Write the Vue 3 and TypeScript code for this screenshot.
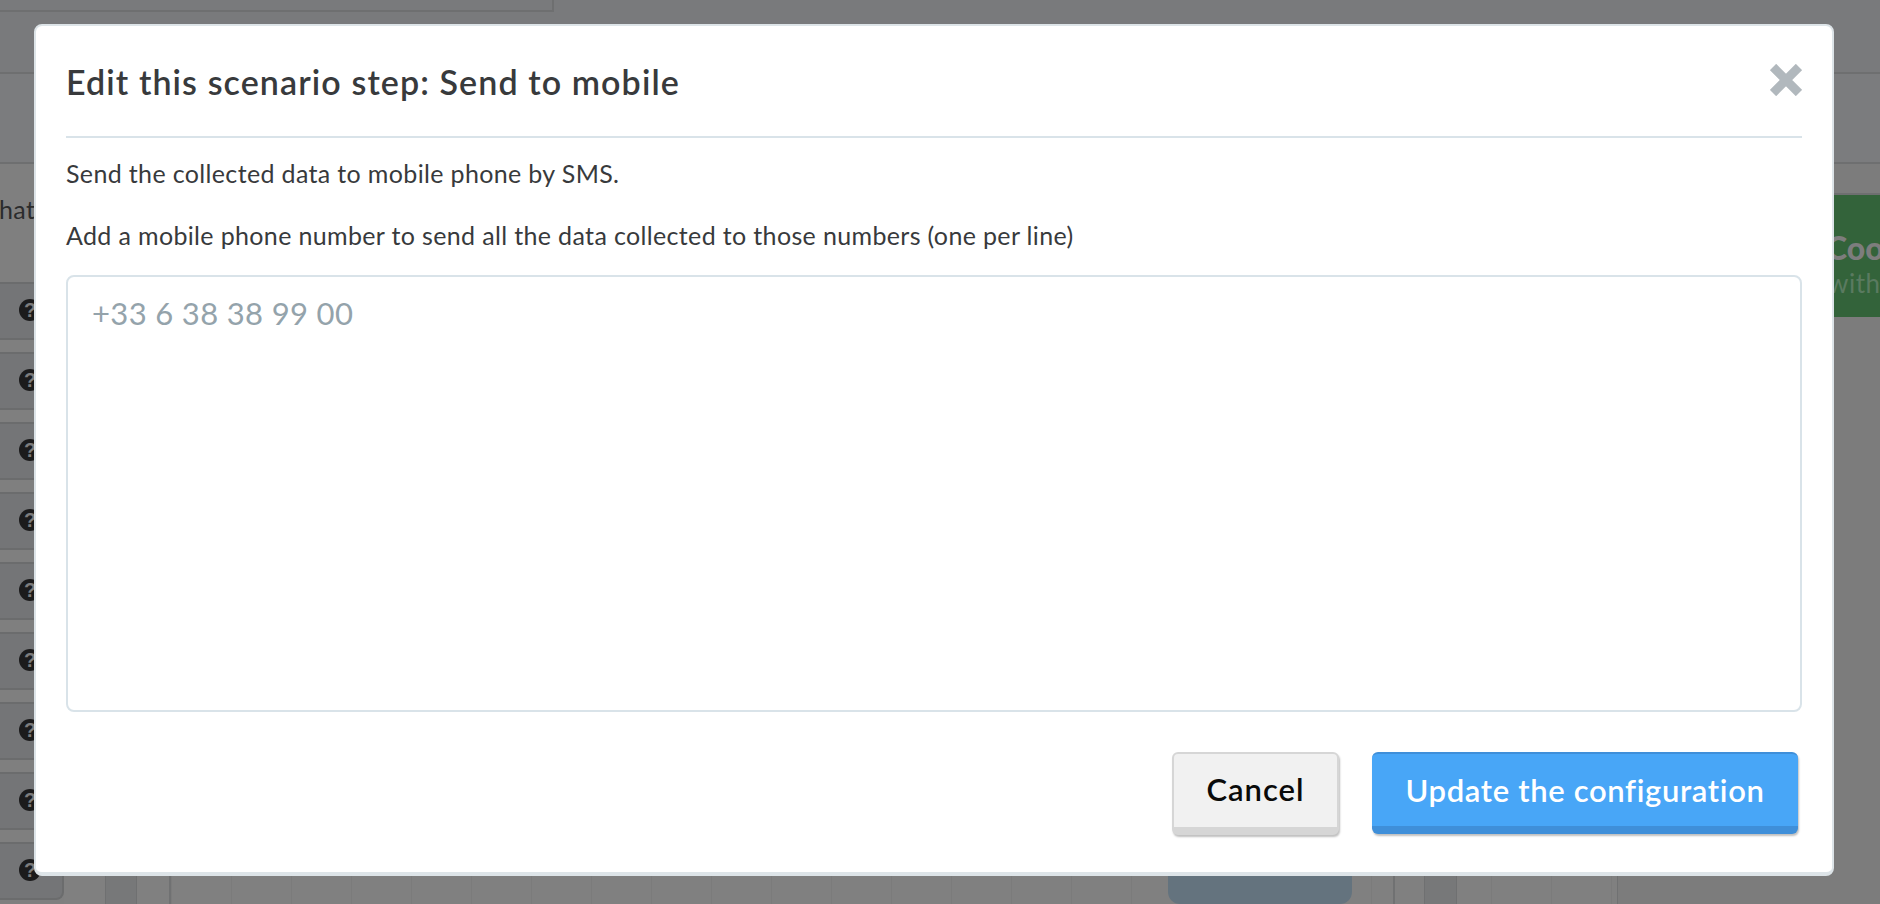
<script setup lang="ts">
const rows: number[] = [1, 2, 3, 4, 5, 6, 7, 8, 9]
</script>

<template>
  <div class="page">
    <div class="top">
      <div class="top-panel"></div>
    </div>
    <div class="band"></div>
    <div class="main">
      <aside class="left">
        <div class="intro">hat</div>
        <div class="list">
          <div v-for="r in rows" :key="r" class="row">
            <span class="help">?</span>
          </div>
        </div>
      </aside>
      <section class="center">
        <div class="timeline">
          <div class="tl-dark tl-a"></div>
          <div class="tl-line tl-b"></div>
          <div class="tl-cta"></div>
          <div class="tl-line tl-c"></div>
          <div class="tl-dark tl-d"></div>
          <div class="tl-line tl-e"></div>
        </div>
      </section>
      <aside class="right">
        <div class="promo">
          <div class="promo-title">Coo</div>
          <div class="promo-sub">with r</div>
        </div>
      </aside>
    </div>

    <div class="modal">
      <header class="modal-head">
        <h2 class="modal-title">Edit this scenario step: Send to mobile</h2>
        <svg class="close" viewBox="0 0 32 32" aria-label="Close">
          <path d="M3 3 29 29M29 3 3 29" fill="none" stroke="#b1b8bd" stroke-width="9" />
        </svg>
      </header>
      <p class="text first">Send the collected data to mobile phone by SMS.</p>
      <p class="text">Add a mobile phone number to send all the data collected to those numbers (one per line)</p>
      <textarea class="numbers" placeholder="+33 6 38 38 99 00"></textarea>
      <footer class="actions">
        <button class="btn cancel">Cancel</button>
        <button class="btn update">Update the configuration</button>
      </footer>
    </div>
  </div>
</template>

<style>
html, body { margin: 0; padding: 0; }
</style>

<style scoped>
.page {
  position: relative;
  width: 1880px;
  height: 904px;
  overflow: hidden;
  display: flex;
  flex-direction: column;
  background: #7f7f7f;
  font-family: Lato, "Liberation Sans", sans-serif;
}
.top {
  height: 72px;
  flex: none;
  background: #797a7c;
  border-bottom: 2px solid #6e6f70;
}
.top-panel {
  width: 552px;
  height: 10px;
  border-right: 2px solid #6e6f70;
  border-bottom: 2px solid #6e6f70;
  box-sizing: content-box;
}
.band {
  height: 88px;
  flex: none;
  background: #7b7c7e;
  border-bottom: 2px solid #6e6f70;
}
.main {
  flex: 1;
  display: flex;
  min-height: 0;
}
.left {
  width: 64px;
  flex: none;
}
.intro {
  height: 118px;
  box-sizing: border-box;
  padding-top: 27px;
  font-size: 25px;
  letter-spacing: 0.35px;
  line-height: 36px;
  color: #2b2c2d;
  white-space: nowrap;
  margin-left: -1px;
}
.list {
  display: flex;
  flex-direction: column;
  gap: 12px;
}
.row {
  height: 58px;
  flex: none;
  box-sizing: border-box;
  padding: 15px 0 0 19px;
  background: #747577;
  border-top: 2px solid #6b6c6d;
  border-bottom: 2px solid #6b6c6d;
  border-right: 2px solid #6b6c6d;
}
.row:last-child {
  border-bottom-right-radius: 8px;
}
.help {
  display: block;
  width: 22px;
  height: 22px;
  border-radius: 50%;
  background: #1b1b1c;
  color: #7c7c7c;
  font: 700 20px/22px "Liberation Sans", sans-serif;
  text-align: center;
}
.center {
  flex: 1;
  min-width: 0;
  display: flex;
  flex-direction: column;
  justify-content: flex-end;
}
.timeline {
  height: 40px;
  display: flex;
  align-items: stretch;
  background: repeating-linear-gradient(90deg, #808080 0, #808080 47px, #7b7b7b 47px, #7b7b7b 48px, #808080 48px, #808080 60px);
  padding-left: 41px;
}
.tl-dark {
  background: #777879;
  border-left: 1px solid #6f7071;
  border-right: 1px solid #6f7071;
  box-sizing: border-box;
  flex: none;
}
.tl-a { width: 32px; }
.tl-line { width: 2px; flex: none; background: #707172; }
.tl-b { margin-left: 32px; }
.tl-cta {
  width: 184px;
  flex: none;
  margin-left: 997px;
  background: #64737e;
  border-radius: 0 0 12px 12px;
}
.tl-c { margin-left: 41px; }
.tl-d { width: 33px; margin-left: 29px; }
.tl-e { margin-left: 160px; }
.right {
  width: 262px;
  flex: none;
  background: #7c7c7c;
  overflow: hidden;
}
.promo {
  margin-top: 29px;
  height: 124px;
  background: #33633a;
  border-top: 2px solid #6e6f70;
  box-sizing: border-box;
  padding: 35px 0 0 210px;
  white-space: nowrap;
}
.promo-title {
  font-size: 32px;
  font-weight: 900;
  line-height: 36px;
  margin-left: -2px;
  color: #7d7d7d;
}
.promo-sub {
  font-size: 26px;
  line-height: 34px;
  letter-spacing: 0.5px;
  color: #5a7a60;
}
.modal {
  position: absolute;
  left: 34px;
  top: 24px;
  width: 1800px;
  height: 852px;
  box-sizing: border-box;
  background: #fff;
  border: 2px solid #dde4e8;
  border-bottom-width: 4px;
  border-radius: 8px;
  padding: 0 30px;
  color: #383a3c;
}
.modal-head {
  height: 112px;
  box-sizing: border-box;
  border-bottom: 2px solid #d9e3e9;
  display: flex;
  justify-content: space-between;
  align-items: flex-start;
}
.modal-title {
  margin: 33px 0 0;
  font-size: 34px;
  letter-spacing: 1.1px;
  line-height: 46px;
  font-weight: 600;
  color: #383a3c;
}
.close {
  width: 32px;
  height: 32px;
  margin-top: 38px;
  flex: none;
}
.text {
  margin: 26px 0 0;
  font-size: 25px;
  letter-spacing: 0.35px;
  line-height: 36px;
}
.text.first {
  margin-top: 17px;
}
.numbers {
  display: block;
  width: 100%;
  height: 437px;
  margin-top: 22px;
  box-sizing: border-box;
  border: 2px solid #d9e3e9;
  border-radius: 8px;
  padding: 16px 24px;
  font-family: inherit;
  font-size: 31px;
  letter-spacing: 0.34px;
  line-height: 40px;
  resize: none;
  outline: none;
}
.numbers::placeholder {
  color: #94a3ab;
  opacity: 1;
}
.actions {
  margin-top: 40px;
  padding-right: 4px;
  display: flex;
  justify-content: flex-end;
  gap: 33px;
}
.btn {
  box-sizing: border-box;
  height: 82px;
  border-radius: 6px;
  font-family: inherit;
  font-size: 31px;
  letter-spacing: 0.65px;
  font-weight: 600;
  box-shadow: 1px 2px 2px rgba(0, 0, 0, 0.25);
  padding: 0;
}
.cancel {
  width: 167px;
  height: 83px;
  background: #f1f1f1;
  color: #0a0a0a;
  letter-spacing: 1px;
  border: 2px solid #d6d6d6;
  border-bottom: 8px solid #d6d6d6;
  padding-bottom: 3px;
}
.update {
  width: 426px;
  background: #48a6f7;
  color: #fff;
  border: 0;
  border-top: 2px solid #3f8fd9;
  border-bottom: 8px solid #3f8fd9;
  padding-bottom: 1px;
}
</style>
